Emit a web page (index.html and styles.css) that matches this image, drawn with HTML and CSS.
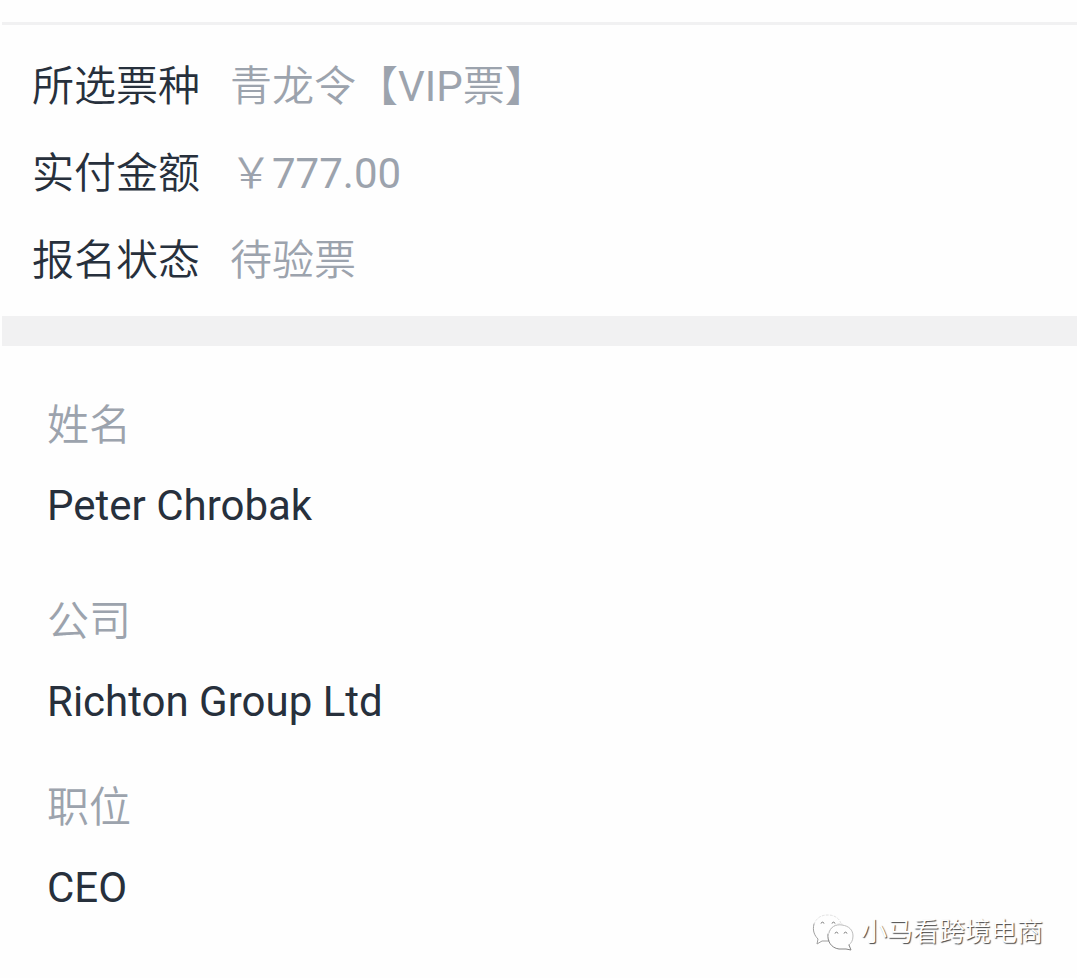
FILE: index.html
```html
<!DOCTYPE html>
<html lang="zh-CN">
<head>
<meta charset="utf-8">
<meta name="viewport" content="width=device-width, initial-scale=1">
<title>报名信息</title>
<link rel="stylesheet" href="styles.css">
</head>
<body>
<main class="page">
  <dl class="ticket">
    <div class="ticket-row"><dt>所选票种</dt><dd>青龙令【VIP票】</dd></div>
    <div class="ticket-row"><dt>实付金额</dt><dd>￥777.00</dd></div>
    <div class="ticket-row"><dt>报名状态</dt><dd>待验票</dd></div>
  </dl>
  <dl class="attendee">
    <div class="field"><dt>姓名</dt><dd>Peter Chrobak</dd></div>
    <div class="field field-company"><dt>公司</dt><dd>Richton Group Ltd</dd></div>
    <div class="field"><dt>职位</dt><dd>CEO</dd></div>
  </dl>
</main>
<div class="watermark">
  <svg class="watermark-icon" viewBox="0 0 42 36" aria-hidden="true">
    <g fill="none" stroke-linecap="round" stroke-linejoin="round">
      <path stroke="#e2e2e2" stroke-dasharray="2 2" d="M2 10C5 3 10 1 16 1C23 1 28 5 29 10M17 18C20 12 25 9 30 10"/>
      <path stroke="#a0a0a0" d="M2 10C0 17 3 22 6 25L5 30L10 27H17"/>
      <path stroke="#bdbdbd" d="M17 19C18 13 24 10 30 11C37 12 41 16 41 22C41 27 39 29 37 31"/>
      <path stroke="#858585" d="M16 20C15 27 19 34 27 35H34L39 36L37 31"/>
      <path stroke="#777" d="M9 9Q10.500 7 12 9M20 9Q21.500 7 23 9M23 19Q24.500 17 26 19M32 19Q33.500 17 35 19"/>
    </g>
  </svg>
  <span>小马看跨境电商</span>
</div>
</body>
</html>
```
FILE: styles.css
```css
* {
  box-sizing: border-box;
}

body {
  margin: 0;
  min-height: 100vh;
  position: relative;
  background: #fefefe;
  color: #27303c;
  font-family: Roboto, "Noto Sans CJK SC DemiLight", "Noto Sans CJK SC", sans-serif;
  font-size: 42px;
  line-height: 60px;
}

dl,
dd {
  margin: 0;
}

.page {
  padding: 22px 0 0 2px;
}

.ticket {
  display: flex;
  flex-direction: column;
  gap: 27px;
  padding: 32px 30px 25px;
  border-top: 3px solid #f1f1f2;
  border-bottom: 30px solid #f1f1f2;
}

.ticket-row {
  display: flex;
  gap: 30px;
}

.ticket dd,
.attendee dt {
  color: #9ca3ad;
}

.attendee {
  padding: 50px 45px 32px;
}

.field {
  display: flex;
  flex-direction: column;
  gap: 20px;
}

.field-company {
  margin: 56px 0 46px;
}

.watermark {
  position: absolute;
  right: 34px;
  bottom: 26px;
  display: flex;
  align-items: center;
  gap: 7px;
  color: #fff;
  font-size: 26px;
  line-height: 40px;
  text-shadow: 1px 1px 1px #444;
}

.watermark-icon {
  width: 42px;
  height: 36px;
  overflow: visible;
}
```
